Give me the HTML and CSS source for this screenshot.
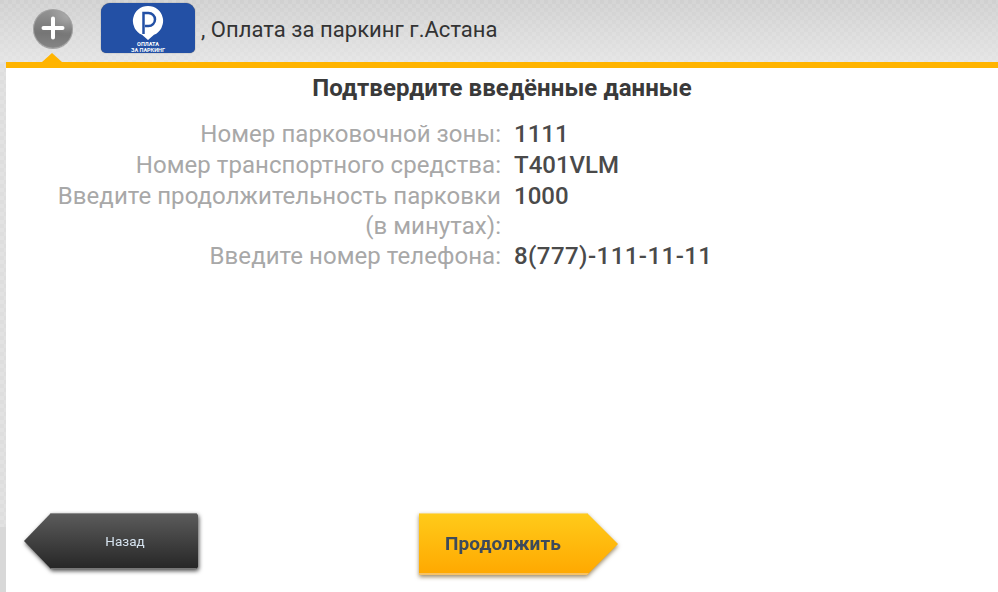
FILE: index.html
```html
<!DOCTYPE html>
<html lang="en">
    <head>
        <meta charset="UTF-8" />
        <title>Оплата за паркинг</title>
        <link rel="stylesheet" href="styles.css">
    </head>
    <body>
        <div id="header">
            <div class="plus">
                <svg width="24" height="24" viewBox="0 0 24 24">
                    <path d="M12 2.500v19M2.500 12h19" stroke="#fff" stroke-width="4" stroke-linecap="round" fill="none" />
                </svg>
            </div>
            <div class="logo">
                <svg class="logo-pin" width="32" height="36" viewBox="0 0 32 36">
                    <path d="M16 1a15 15 0 0 1 6 28.800l-6 5.200-6-5.200A15 15 0 0 1 16 1z" fill="#fff" />
                    <path d="M11.500 29V8h5a6.500 6.500 0 0 1 0 13H13" stroke="#2350a5" stroke-width="2.500" fill="none" />
                </svg>
                <div class="logo-text">ОПЛАТА<br>ЗА ПАРКИНГ</div>
            </div>
            <div class="service">, Оплата за паркинг г.Астана</div>
        </div>
        <div id="panel">
            <h1>Подтвердите введённые данные</h1>
            <div id="fields">
                <div class="name">Номер парковочной зоны:</div>
                <div class="value">1111</div>
                <div class="name">Номер транспортного средства:</div>
                <div class="value">T401VLM</div>
                <div class="name long">Введите продолжительность парковки<br>(в минутах):</div>
                <div class="value">1000</div>
                <div class="name">Введите номер телефона:</div>
                <div class="value phone">8(777)-111-11-11</div>
            </div>
            <div id="buttons">
                <div class="btn-wrap back-wrap"><button class="back">Назад</button></div>
                <div class="btn-wrap next-wrap"><button class="next">Продолжить</button></div>
            </div>
        </div>
    </body>
</html>
```
FILE: styles.css
```css
body {
    margin: 0;
    height: 592px;
    overflow: hidden;
    display: flex;
    flex-direction: column;
    font-family: Roboto, "Liberation Sans", sans-serif;
    background:
        linear-gradient(#d8d8d8, #d8d8d8) no-repeat 0 527px / 100% 65px,
        repeating-conic-gradient(rgba(255, 255, 255, 0.12) 0 25%, transparent 0 50%) 0 0 / 8px 8px,
        #dedede;
}

/* header */
#header {
    height: 62px;
    flex: none;
    display: flex;
    align-items: flex-start;
    position: relative;
    background:
        repeating-conic-gradient(rgba(255, 255, 255, 0.1) 0 25%, transparent 0 50%) 0 0 / 8px 8px,
        linear-gradient(#d0d0d0, #e4e4e4);
}
.plus {
    width: 40px;
    height: 40px;
    margin: 9px 0 0 33px;
    border-radius: 50%;
    display: flex;
    align-items: center;
    justify-content: center;
    background:
        radial-gradient(circle at 85% 20%, rgba(255, 255, 255, 0.25), transparent 40%),
        linear-gradient(#959595, #757575 60%, #868686);
    box-shadow: inset 0 0 0 1px #a2a2a2, inset 0 -2px 1px -1px #d4d4d4;
}
.plus svg {
    margin-top: -2px;
}
/* yellow notch under plus button */
#header::after {
    content: "";
    position: absolute;
    left: 42px;
    bottom: 0;
    border-left: 10px solid transparent;
    border-right: 10px solid transparent;
    border-bottom: 9px solid #ffb400;
}
.logo {
    width: 94px;
    height: 50px;
    margin: 3px 0 0 28px;
    border-radius: 9px 9px 5px 5px;
    background: #2350a5;
    box-shadow: 0 0 1px #555;
    display: flex;
    flex-direction: column;
    align-items: center;
    overflow: hidden;
}
.logo-pin {
    margin-top: 2px;
    flex: none;
}
.logo-text {
    color: #fff;
    font-size: 5.500px;
    line-height: 6px;
    font-weight: 700;
    text-align: center;
    white-space: nowrap;
}
.service {
    margin: 17px 0 0 6px;
    font-size: 22px;
    line-height: 26px;
    letter-spacing: 0.04px;
    color: #333;
}

/* main panel */
#panel {
    flex: 1;
    margin-left: 6px;
    border-top: 6px solid #ffb400;
    background: #fff;
    display: flex;
    flex-direction: column;
    min-height: 0;
}
h1 {
    margin: 6px 0 0;
    font-size: 24px;
    line-height: 28px;
    letter-spacing: 0.07px;
    font-weight: 700;
    color: #3a3a3a;
    text-align: center;
}
#fields {
    margin-top: 17px;
    display: grid;
    grid-template-columns: 495px 1fr;
    column-gap: 13px;
    font-size: 24px;
    line-height: 30px;
}
.name {
    text-align: right;
    color: #a8a8a8;
    letter-spacing: 0.05px;
    margin-bottom: 1px;
}
.name.long {
    margin-bottom: 0;
}
.value {
    color: #4a4a4a;
    font-weight: 500;
}
.phone {
    letter-spacing: 0.45px;
}

/* bottom buttons */
#buttons {
    margin-top: auto;
    height: 79px;
    display: flex;
    align-items: flex-start;
    padding-left: 18px;
}
.btn-wrap {
    flex: none;
}
.back-wrap {
    filter: drop-shadow(1px 2px 2px rgba(0, 0, 0, 0.7));
}
.next-wrap {
    margin-left: 221px;
    filter: drop-shadow(0 2px 2px rgba(90, 60, 0, 0.6));
}
button {
    display: block;
    border: none;
    padding: 0;
    font-family: Roboto, "Liberation Sans", sans-serif;
    cursor: pointer;
}
.back {
    width: 174px;
    height: 56px;
    padding-left: 28px;
    font-size: 13.500px;
    color: #d5e2ee;
    background: linear-gradient(#5c5c5c, #262626);
    box-shadow: inset 0 1px 0 #8a8a8a, inset 0 -1px 0 #777;
    clip-path: polygon(27px 0, 172px 0, 100% 2px, 100% 54px, 172px 100%, 27px 100%, 0 50%);
}
.next {
    width: 199px;
    height: 62px;
    padding: 0 31px 2px 0;
    font-size: 19px;
    letter-spacing: 0.1px;
    font-weight: 700;
    color: #3d4a5a;
    background: linear-gradient(#ffcb1a, #ffa800);
    box-shadow: inset 0 1px 0 #f8d878, inset 0 -2px 0 #f6c266;
    clip-path: polygon(0 0, 168px 0, 100% 50%, 168px 100%, 0 100%);
}
```
